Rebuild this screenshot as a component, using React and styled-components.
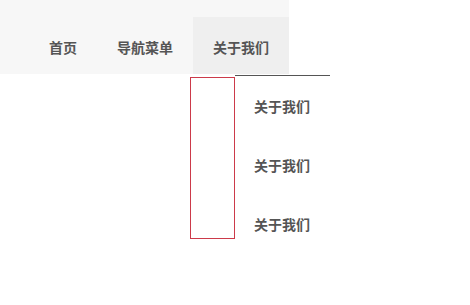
import React from 'react'
import styled, { createGlobalStyle } from 'styled-components'

const GlobalStyle = createGlobalStyle`
  html, body {
    margin: 0;
    padding: 0;
    background: #fff;
  }
  body {
    font-family: "Microsoft YaHei", "Noto Sans CJK SC", sans-serif;
  }
`

const menu = [
    { title: '首页' },
    { title: '导航菜单' },
    { title: '关于我们', active: true, children: ['关于我们', '关于我们', '关于我们'] },
]

export default function App() {
    return (
        <Page>
            <GlobalStyle />
            <NavBar>
                {menu.map((item, i) => (
                    <NavItem key={i} $active={item.active}>
                        <Label>{item.title}</Label>
                        {item.children ? (
                            <Dropdown>
                                <HoverArea />
                                <SubList>
                                    {item.children.map((c, j) => (
                                        <SubItem key={j}>{c}</SubItem>
                                    ))}
                                </SubList>
                            </Dropdown>
                        ) : null}
                    </NavItem>
                ))}
            </NavBar>
        </Page>
    )
}

const Page = styled.div`
min-height:305px;
background:#fff;
`

const NavBar = styled.div`
display:inline-flex;
align-items:flex-end;
height:74px;
padding-left:29px;
background:#f7f7f7;
`

const NavItem = styled.div`
position:relative;
height:57px;
padding:0 20px;
box-sizing:border-box;
background:${props => props.$active ? '#efefef' : 'transparent'};
`

const Label = styled.span`
display:block;
line-height:60px;
font-size:14px;
font-weight:bold;
color:#555;
`

const Dropdown = styled.div`
position:absolute;
z-index:10;
top:58px;
left:-3px;
display:flex;
align-items:flex-start;
`

const HoverArea = styled.div`
width:45px;
height:162px;
margin-top:2px;
box-sizing:border-box;
border:1px solid #cc3a4a;
`

const SubList = styled.div`
width:95px;
border-top:1px solid #555;
`

const SubItem = styled.div`
height:59px;
line-height:60px;
padding:0 19px;
font-size:14px;
font-weight:bold;
color:#555;
white-space:nowrap;
`
